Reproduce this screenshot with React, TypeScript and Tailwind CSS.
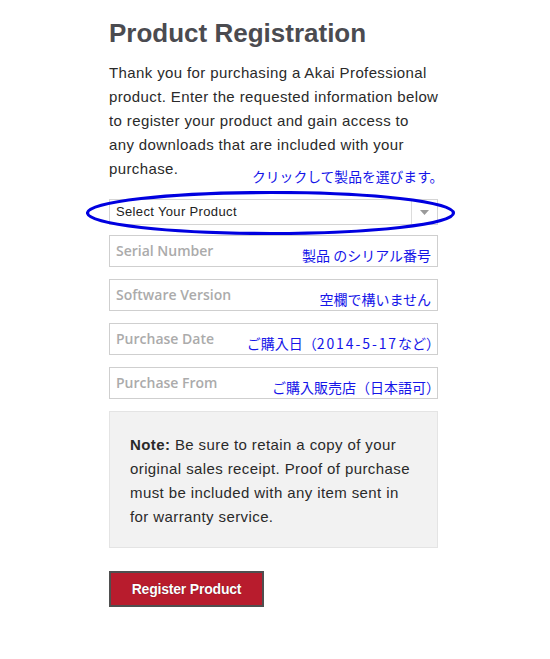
import React from "react";

const jp = "font-['Noto_Sans_CJK_JP',sans-serif]";

function Field({
  placeholder,
  note,
  gap,
  noteRight,
}: {
  placeholder: string;
  note: React.ReactNode;
  gap: string;
  noteRight: string;
}) {
  return (
    <div className={`relative h-[32px] border border-[#cfcfcf] bg-white ${gap}`}>
      <div className="absolute left-[6px] top-[6px] font-['Open_Sans',sans-serif] text-[14px] font-semibold leading-[18px] text-[#ababab]">
        {placeholder}
      </div>
      <div
        className={`absolute top-[11px] whitespace-nowrap text-[14px] leading-[16px] text-[#1515e8] ${noteRight} ${jp}`}
      >
        {note}
      </div>
    </div>
  );
}

export default function App() {
  return (
    <div className="min-h-[659px] w-[550px] bg-white font-['Liberation_Sans',Arial,sans-serif]">
      <div className="relative ml-[109px] w-[329px] pt-[17px]">
        <h1 className="text-[26px] font-bold leading-[32px] text-[#4b4b50]">Product Registration</h1>
        <p className="mt-[12px] whitespace-nowrap text-[15px] leading-[24px] tracking-[0.38px] text-[#2a2a2a]">
          Thank you for purchasing a Akai Professional
          <br />
          product. Enter the requested information below
          <br />
          to register your product and gain access to
          <br />
          any downloads that are included with your
          <br />
          purchase.
        </p>
        <div
          className={`absolute left-[143px] top-[168px] whitespace-nowrap text-[13.8px] leading-[16px] text-[#1515e8] ${jp}`}
        >
          クリックして製品を選びます。
        </div>
        <div className="relative mt-[18px] flex h-[26px] items-center border border-[#d4d4d4] bg-white">
          <div className="flex-1 pl-[6px] text-[13px] tracking-[0.35px] text-[#222]">Select Your Product</div>
          <div className="flex h-full w-[26px] items-center justify-center border-l border-[#dcdcdc]">
            <svg width="9" height="5" viewBox="0 0 9 5">
              <path d="M0 0 L9 0 L4.5 5 Z" fill="#9a9a9a" />
            </svg>
          </div>
          <svg className="absolute left-[-24px] top-[-9px]" width="370" height="44" viewBox="0 0 370 44">
            <ellipse cx="184.5" cy="22" rx="183" ry="20.5" fill="none" stroke="#0000e0" strokeWidth="3.2" />
          </svg>
        </div>
        <Field gap="mt-[10px]" noteRight="right-[6px]" placeholder="Serial Number" note="製品 のシリアル番号" />
        <Field gap="mt-[12px]" noteRight="right-[6px]" placeholder="Software Version" note="空欄で構いません" />
        <Field
          gap="mt-[12px]"
          noteRight="right-[-3px]"
          placeholder="Purchase Date"
          note={
            <>
              ご購入日（<span className="tracking-[1.9px]">2014-5-17</span>など）
            </>
          }
        />
        <Field gap="mt-[12px]" noteRight="right-[-3px]" placeholder="Purchase From" note="ご購入販売店（日本語可）" />
        <div className="mt-[12px] h-[137px] whitespace-nowrap border border-[#e4e4e4] bg-[#f2f2f2] px-[20px] pt-[21px] text-[15px] leading-[24px] tracking-[0.4px] text-[#2a2a2a]">
          <span className="font-bold">Note:</span> Be sure to retain a copy of your
          <br />
          original sales receipt. Proof of purchase
          <br />
          must be included with any item sent in
          <br />
          for warranty service.
        </div>
        <button className="mt-[23px] flex h-[36px] w-[155px] items-center justify-center border-2 border-[#4f4f4f] bg-[#b81c2d] text-[14px] font-bold tracking-[-0.2px] text-white [text-shadow:0_0_1px_#5a0010]">
          Register Product
        </button>
      </div>
    </div>
  );
}
